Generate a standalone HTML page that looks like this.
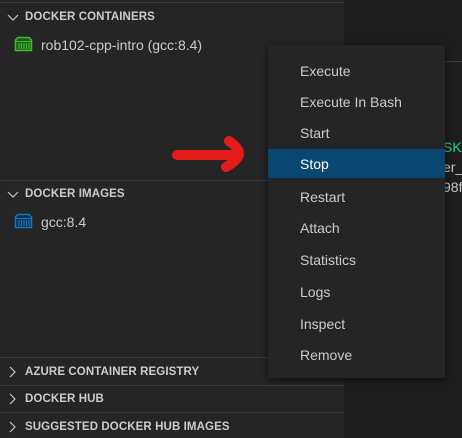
<!DOCTYPE html>
<html><head><style>
body{margin:0;width:462px;height:438px;background:#1e1e1e;position:relative;overflow:hidden;font-family:"Liberation Sans",sans-serif;}
.side{position:absolute;left:0;top:0;width:344px;height:438px;background:#252526;}
.hl{position:absolute;left:0;width:344px;height:1px;background:#3c3c3c;}
.h{position:absolute;left:25px;font-size:11.5px;font-weight:bold;color:#cccccc;letter-spacing:0.1px;}
.chev{position:absolute;left:7px;}
.it{position:absolute;left:41px;font-size:14px;color:#cccccc;}
.menu{position:absolute;left:268px;top:45px;width:177px;height:333px;background:#252526;box-shadow:0 2px 8px rgba(0,0,0,.6);}
.mi{position:absolute;left:0;width:177px;height:29px;line-height:30px;font-size:14px;color:#cccccc;padding-left:32px;box-sizing:border-box;}
.sel{background:#094771;color:#fff;}
.t{position:absolute;left:443px;font-family:"Liberation Sans",sans-serif;font-size:14px;color:#cccccc;}
</style></head><body>
<div style="position:absolute;left:344px;top:61px;width:118px;height:1px;background:#3c3c3c"></div>
<div class="t" style="top:139px;color:#23d18b">SKT</div>
<div class="t" style="top:159px">er_</div>
<div class="t" style="top:179px">98f</div>
<div class="side">
<div class="hl" style="top:2px"></div>
<svg class="chev" style="top:13px" width="12" height="10"><path d="M1 2 L6 7 L11 2" stroke="#c5c5c5" fill="none" stroke-width="1.2"/></svg>
<div class="h" style="top:11px">DOCKER CONTAINERS</div>
<svg style="position:absolute;left:14px;top:36px" width="19" height="16"><path d="M4 1.5 H15 L17.5 4 V14.5 H1.5 V4 Z" fill="#1e5a1e" stroke="#3fbf2a" stroke-width="1.5"/><path d="M1.5 5.5 H17.5" stroke="#3fbf2a"/><path d="M5 7v6M7.5 7v6M10 7v6M12.5 7v6M15 7v6" stroke="#3fbf2a" stroke-width="1.2"/></svg>
<div class="it" style="top:37px">rob102-cpp-intro (gcc:8.4)</div>
<div class="hl" style="top:180px"></div>
<svg class="chev" style="top:190px" width="12" height="10"><path d="M1 2 L6 7 L11 2" stroke="#c5c5c5" fill="none" stroke-width="1.2"/></svg>
<div class="h" style="top:188px">DOCKER IMAGES</div>
<svg style="position:absolute;left:14px;top:213px" width="19" height="16"><path d="M4 1.5 H15 L17.5 4 V14.5 H1.5 V4 Z" fill="#0e3050" stroke="#1b75bb" stroke-width="1.5"/><path d="M1.5 5.5 H17.5" stroke="#1b75bb"/><path d="M5 7v6M7.5 7v6M10 7v6M12.5 7v6M15 7v6" stroke="#1b75bb" stroke-width="1.2"/></svg>
<div class="it" style="top:214px">gcc:8.4</div>
<div class="hl" style="top:357px"></div>
<svg class="chev" style="top:366px" width="10" height="12"><path d="M3 1 L8 6 L3 11" stroke="#c5c5c5" fill="none" stroke-width="1.2"/></svg>
<div class="h" style="top:366px">AZURE CONTAINER REGISTRY</div>
<div class="hl" style="top:385px"></div>
<svg class="chev" style="top:393px" width="10" height="12"><path d="M3 1 L8 6 L3 11" stroke="#c5c5c5" fill="none" stroke-width="1.2"/></svg>
<div class="h" style="top:393px">DOCKER HUB</div>
<div class="hl" style="top:412px"></div>
<svg class="chev" style="top:421px" width="10" height="12"><path d="M3 1 L8 6 L3 11" stroke="#c5c5c5" fill="none" stroke-width="1.2"/></svg>
<div class="h" style="top:421px">SUGGESTED DOCKER HUB IMAGES</div>
<svg style="position:absolute;left:0;top:0" width="344" height="200"><path d="M177 155 H236" stroke="#e31b1b" stroke-width="10" stroke-linecap="round"/><path d="M229 141 Q242 150 238 157 Q234 163 226 167" stroke="#e31b1b" stroke-width="10" fill="none" stroke-linecap="round"/></svg>
</div>
<div class="menu">
<div class="mi" style="top:11px">Execute</div>
<div class="mi" style="top:42px">Execute In Bash</div>
<div class="mi" style="top:73px">Start</div>
<div class="mi sel" style="top:104px">Stop</div>
<div class="mi" style="top:137px">Restart</div>
<div class="mi" style="top:168px">Attach</div>
<div class="mi" style="top:200px">Statistics</div>
<div class="mi" style="top:232px">Logs</div>
<div class="mi" style="top:264px">Inspect</div>
<div class="mi" style="top:295px">Remove</div>
</div>
</body></html>
